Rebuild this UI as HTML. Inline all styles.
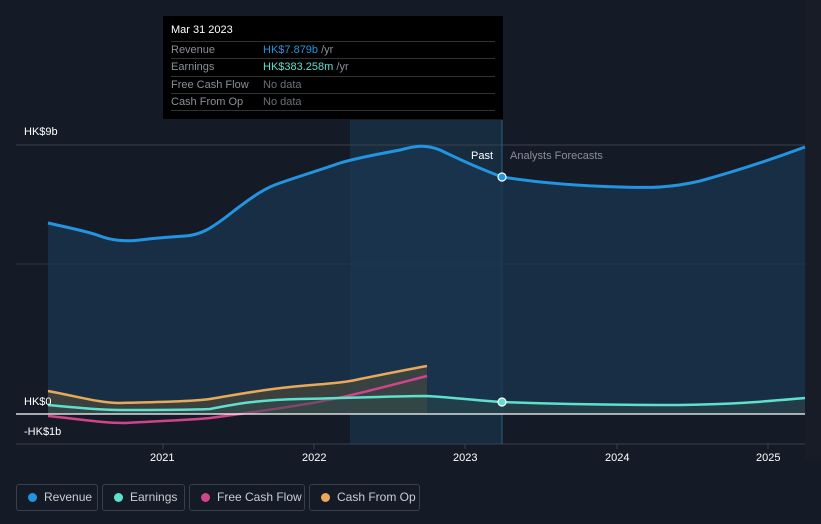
<!DOCTYPE html>
<html><head><style>
html,body{margin:0;width:821px;height:524px;overflow:hidden}
body{background:#151b26;font-family:"Liberation Sans",sans-serif;position:relative}
.t{position:absolute;font-size:11px;color:#fff}
.tip{position:absolute;left:163px;top:16px;width:340px;height:103px;background:#000}
.row{position:absolute;left:8px;width:324px;border-top:1px solid #333;height:17px;font-size:11px;color:#8a8f98;line-height:17px}
.row span{position:absolute;left:92px}
.leg{position:absolute;top:484px;height:27px;border:1px solid #3a404b;border-radius:3px;box-sizing:border-box;font-size:12px;color:#c8ccd3;line-height:25px;padding-left:27px;white-space:nowrap}
.leg i{position:absolute;left:11px;top:8px;width:9px;height:9px;border-radius:50%}
</style></head><body>
<svg width="821" height="524" style="position:absolute;left:0;top:0">
<rect x="805" y="0" width="16" height="460" fill="#171c26"/>
<rect x="350" y="120" width="152" height="324" fill="#1b3a55" opacity="0.55"/>
<line x1="16" y1="145" x2="805" y2="145" stroke="#3a414c"/>
<line x1="16" y1="264" x2="805" y2="264" stroke="#2c3440"/>
<line x1="16" y1="444" x2="805" y2="444" stroke="#3a414c"/>
<line x1="502" y1="120" x2="502" y2="444" stroke="#2a5f85"/>
<path d="M48,223 C70,228 90,232 100,236 C110,240 125,242 140,240 C155,238 170,237 185,236 C200,235 210,230 235,210 C255,195 265,188 280,183 C300,176 320,170 340,163 C360,157 385,153 400,150 C415,146 425,144 440,150 C455,157 470,165 502,177 C540,183 580,186 620,187 C650,188 670,188 700,181 C740,170 770,160 805,147 L805,414 L48,414 Z" fill="#1a3550" opacity="0.75"/>
<path d="M48,223 C70,228 90,232 100,236 C110,240 125,242 140,240 C155,238 170,237 185,236 C200,235 210,230 235,210 C255,195 265,188 280,183 C300,176 320,170 340,163 C360,157 385,153 400,150 C415,146 425,144 440,150 C455,157 470,165 502,177 C540,183 580,186 620,187 C650,188 670,188 700,181 C740,170 770,160 805,147" fill="none" stroke="#2394e0" stroke-width="3"/>
<path d="M48,391 C80,397 100,403 120,403 C150,402 190,402 210,399 C240,394 260,390 290,387 C320,384 345,383 360,379 C390,373 410,369 427,366 L427,414 L48,414Z" fill="#5a5238" opacity="0.5"/>
<path d="M48,391 C80,397 100,403 120,403 C150,402 190,402 210,399 C240,394 260,390 290,387 C320,384 345,383 360,379 C390,373 410,369 427,366" fill="none" stroke="#e8a95a" stroke-width="2.5"/>
<path d="M48,416 C80,419 100,423 125,423 C160,421 190,420 210,418 C240,414 270,410 300,405 C340,399 380,388 427,376" fill="none" stroke="#d0458a" stroke-width="2.5"/>
<path d="M48,405 C80,408 100,410 120,410 C160,410 190,410 210,409 C240,403 260,400 300,399 C350,398 400,396 425,396 C450,397 470,400 502,402 C560,404 620,405 680,405 C740,404 770,401 805,398 L805,414 L48,414Z" fill="#2e4a4a" opacity="0.5"/>
<path d="M48,405 C80,408 100,410 120,410 C160,410 190,410 210,409 C240,403 260,400 300,399 C350,398 400,396 425,396 C450,397 470,400 502,402 C560,404 620,405 680,405 C740,404 770,401 805,398" fill="none" stroke="#5fe0cd" stroke-width="2.5"/>
<line x1="16" y1="414" x2="805" y2="414" stroke="#fff" stroke-width="1.2"/>
<circle cx="502" cy="177" r="4" fill="#2394e0" stroke="#fff" stroke-width="1.2"/>
<circle cx="502" cy="402" r="4" fill="#5fe0cd" stroke="#fff" stroke-width="1.2"/>
<g stroke="#3a414c"><line x1="163" y1="444" x2="163" y2="449"/><line x1="314" y1="444" x2="314" y2="449"/><line x1="465" y1="444" x2="465" y2="449"/><line x1="617" y1="444" x2="617" y2="449"/><line x1="768" y1="444" x2="768" y2="449"/></g>
</svg>
<div class="t" style="left:24px;top:126px">HK$9b</div>
<div class="t" style="left:24px;top:396px">HK$0</div>
<div class="t" style="left:24px;top:426px">-HK$1b</div>
<div class="t" style="left:150px;top:452px">2021</div>
<div class="t" style="left:302px;top:452px">2022</div>
<div class="t" style="left:453px;top:452px">2023</div>
<div class="t" style="left:605px;top:452px">2024</div>
<div class="t" style="left:756px;top:452px">2025</div>
<div class="t" style="left:471px;top:150px">Past</div>
<div class="t" style="left:510px;top:150px;color:#8a8f98">Analysts Forecasts</div>
<div class="tip">
<div style="position:absolute;left:8px;top:8px;font-size:11px;color:#fff">Mar 31 2023</div>
<div class="row" style="top:25px">Revenue<span style="color:#2394e0">HK$7.879b <b style="font-weight:normal;color:#8a8f98">/yr</b></span></div>
<div class="row" style="top:42px">Earnings<span style="color:#5fe0cd">HK$383.258m <b style="font-weight:normal;color:#8a8f98">/yr</b></span></div>
<div class="row" style="top:60px">Free Cash Flow<span style="color:#6a6f78">No data</span></div>
<div class="row" style="top:77px">Cash From Op<span style="color:#6a6f78">No data</span></div>
<div style="position:absolute;left:8px;top:94px;width:324px;border-top:1px solid #333"></div>
</div>
<div class="leg" style="left:16px;width:82px"><i style="background:#2394e0"></i>Revenue</div>
<div class="leg" style="left:102px;width:83px"><i style="background:#5fe0cd"></i>Earnings</div>
<div class="leg" style="left:189px;width:116px"><i style="background:#d0458a"></i>Free Cash Flow</div>
<div class="leg" style="left:309px;width:111px"><i style="background:#e8a95a"></i>Cash From Op</div>
</body></html>
